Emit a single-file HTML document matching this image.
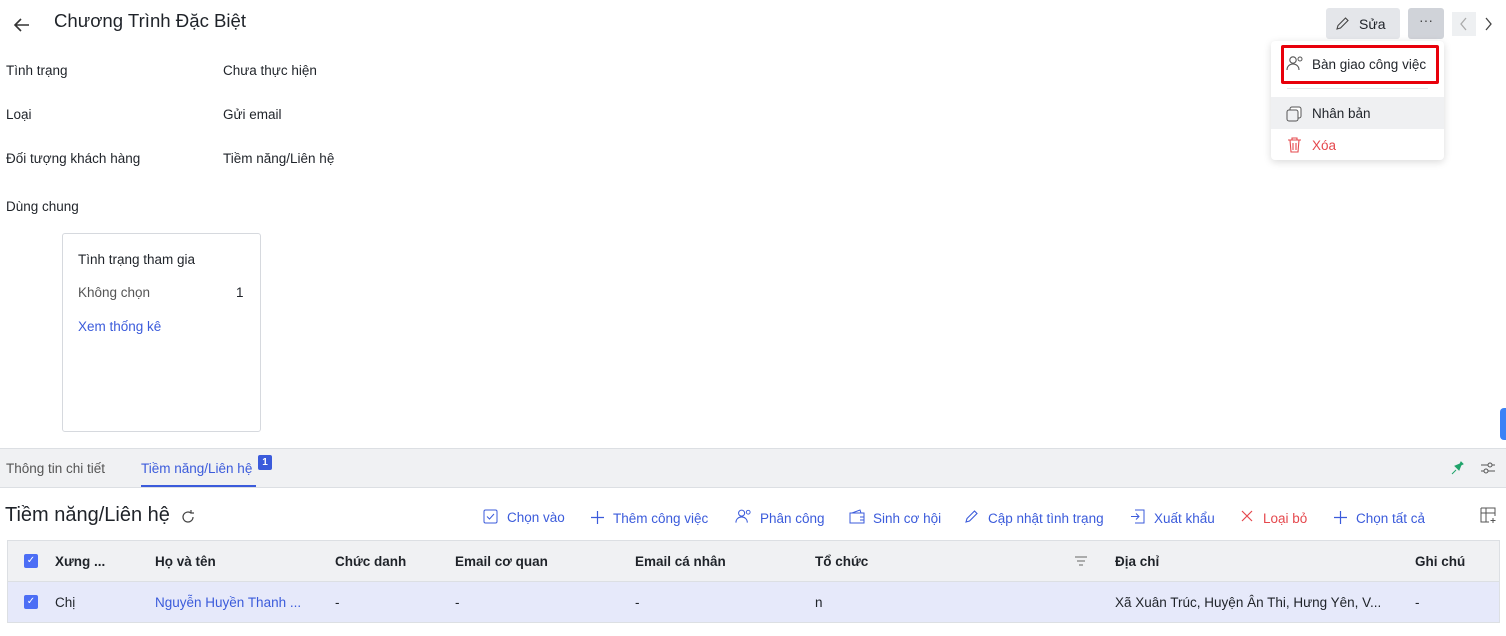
<!DOCTYPE html><html><head><meta charset="utf-8"><style>
*{box-sizing:border-box;margin:0;padding:0}
body{width:1506px;height:636px;overflow:hidden;background:#fff;font-family:"Liberation Sans",sans-serif;font-size:13.5px;color:#1f2329;position:relative}
.a{position:absolute;white-space:nowrap}
.blue{color:#3b5bdb}
svg{position:absolute}
</style></head><body>
<svg style="left:12px;top:15px" width="20" height="20" viewBox="0 0 20 20"><path d="M17 10H3M9 4l-6 6 6 6" fill="none" stroke="#333" stroke-width="1.6"/></svg>
<div class="a" style="left:54px;top:10px;font-size:18.6px">Chương Trình Đặc Biệt</div>

<div class="a" style="left:1326px;top:8px;width:74px;height:31px;background:#e4e6ea;border-radius:3px"></div>
<svg style="left:1335px;top:16px" width="15" height="15" viewBox="0 0 15 15"><path d="M2 13l1-3.5 7.5-7.5 2.5 2.5L5.5 12z" fill="none" stroke="#444" stroke-width="1.1"/></svg>
<div class="a" style="left:1359px;top:16px;font-size:14px">Sửa</div>
<div class="a" style="left:1408px;top:8px;width:36px;height:31px;background:#d0d3d9;border-radius:3px;text-align:center;line-height:24px;font-size:14px;color:#444">···</div>
<div class="a" style="left:1452px;top:12px;width:24px;height:24px;background:#eef0f2"></div>
<svg style="left:1458px;top:16px" width="12" height="16"><path d="M8 2L3 8l5 6" fill="none" stroke="#aaa" stroke-width="1.3"/></svg>
<svg style="left:1482px;top:16px" width="12" height="16"><path d="M4 2l5 6-5 6" fill="none" stroke="#444" stroke-width="1.3"/></svg>

<div class="a" style="left:1271px;top:41px;width:173px;height:119px;background:#fff;border-radius:4px;box-shadow:0 2px 8px rgba(0,0,0,.15)"></div>
<div class="a" style="left:1281px;top:45px;width:158px;height:39px;border:3px solid #e8000b;border-radius:2px"></div>
<svg style="left:1286px;top:55px" width="18" height="16" viewBox="0 0 18 16"><circle cx="7" cy="5" r="3.2" fill="none" stroke="#555" stroke-width="1.1"/><path d="M1 15c0-4 3-6 6-6s6 2 6 6" fill="none" stroke="#555" stroke-width="1.1"/><circle cx="14" cy="4" r="2" fill="none" stroke="#555"/></svg>
<div class="a" style="left:1312px;top:57px">Bàn giao công việc</div>
<div class="a" style="left:1287px;top:88px;width:141px;height:1px;background:#e4e6ea"></div>
<div class="a" style="left:1271px;top:97px;width:173px;height:32px;background:#eff0f2"></div>
<svg style="left:1286px;top:106px" width="16" height="16"><rect x="4" y="1" width="11" height="11" rx="2" fill="#fff" stroke="#555"/><rect x="1" y="4" width="11" height="11" rx="2" fill="#eff0f2" stroke="#555"/></svg>
<div class="a" style="left:1312px;top:106px">Nhân bản</div>
<svg style="left:1287px;top:137px" width="15" height="16"><path d="M1 3h13M5 3V1h5v2M3 3l1 12h7l1-12M6 6v7M9 6v7" fill="none" stroke="#e5484d" stroke-width="1.1"/></svg>
<div class="a" style="left:1312px;top:138px;color:#e5484d">Xóa</div>

<div class="a" style="left:6px;top:63px">Tình trạng</div><div class="a" style="left:223px;top:63px">Chưa thực hiện</div>
<div class="a" style="left:6px;top:107px">Loại</div><div class="a" style="left:223px;top:107px">Gửi email</div>
<div class="a" style="left:6px;top:151px">Đối tượng khách hàng</div><div class="a" style="left:223px;top:151px">Tiềm năng/Liên hệ</div>
<div class="a" style="left:6px;top:199px">Dùng chung</div>

<div class="a" style="left:62px;top:233px;width:199px;height:199px;border:1px solid #d6d9de;border-radius:3px"></div>
<div class="a" style="left:78px;top:252px">Tình trạng tham gia</div>
<div class="a" style="left:78px;top:285px;color:#555">Không chọn</div><div class="a" style="left:236px;top:285px">1</div>
<div class="a blue" style="left:78px;top:319px">Xem thống kê</div>
<div class="a" style="left:1500px;top:408px;width:8px;height:32px;background:#3b82f6;border-radius:4px 0 0 4px"></div>

<div class="a" style="left:0;top:448px;width:1506px;height:40px;background:#f0f1f3;border-top:1px solid #dcdfe3;border-bottom:1px solid #dcdfe3"></div>
<div class="a" style="left:6px;top:461px;color:#555">Thông tin chi tiết</div>
<div class="a blue" style="left:141px;top:461px">Tiềm năng/Liên hệ</div>
<div class="a" style="left:141px;top:485px;width:115px;height:2px;background:#3b5bdb"></div>
<div class="a" style="left:258px;top:455px;width:14px;height:15px;background:#3b5bdb;color:#fff;font-size:10px;font-weight:bold;text-align:center;line-height:15px;border-radius:2px">1</div>
<svg style="left:1449px;top:460px" width="16" height="16"><path d="M3 14l4-4M6 6l4 4 2-5 2-1-2-2-1 2z" fill="#20a46b" stroke="#20a46b"/></svg>
<svg style="left:1480px;top:460px" width="16" height="16"><path d="M1 5h14M1 11h14" stroke="#555"/><circle cx="10" cy="5" r="2" fill="#f0f1f3" stroke="#555"/><circle cx="6" cy="11" r="2" fill="#f0f1f3" stroke="#555"/></svg>

<div class="a" style="left:5px;top:504px;font-size:20px">Tiềm năng/Liên hệ</div>
<svg style="left:180px;top:509px" width="16" height="16"><path d="M13 8a5 5 0 1 1-2-4M11 1v3h3" fill="none" stroke="#444" stroke-width="1.2"/></svg>
<svg style="left:483px;top:509px" width="15" height="15"><rect x="1" y="1" width="13" height="13" rx="1.5" fill="none" stroke="#3b5bdb"/><path d="M4 7.5l2.5 2.5 4.5-5" fill="none" stroke="#3b5bdb"/></svg>
<div class="a blue" style="left:507px;top:510px">Chọn vào</div>
<svg style="left:590px;top:510px" width="15" height="15"><path d="M7.5 1v13M1 7.5h13" stroke="#3b5bdb" stroke-width="1.2"/></svg>
<div class="a blue" style="left:613px;top:511px">Thêm công việc</div>
<svg style="left:735px;top:508px" width="17" height="16" viewBox="0 0 18 16"><circle cx="7" cy="5" r="3.2" fill="none" stroke="#3b5bdb" stroke-width="1.1"/><path d="M1 15c0-4 3-6 6-6s6 2 6 6" fill="none" stroke="#3b5bdb" stroke-width="1.1"/><circle cx="14" cy="4" r="2" fill="none" stroke="#3b5bdb"/></svg>
<div class="a blue" style="left:760px;top:511px">Phân công</div>
<svg style="left:849px;top:509px" width="16" height="15"><path d="M1 4h14v10H1zM3 4l8-3 1 3M11 8h4v3h-4" fill="none" stroke="#3b5bdb"/></svg>
<div class="a blue" style="left:873px;top:511px">Sinh cơ hội</div>
<svg style="left:964px;top:509px" width="15" height="15" viewBox="0 0 15 15"><path d="M2 13l1-3.5 7.5-7.5 2.5 2.5L5.5 12z" fill="none" stroke="#3b5bdb" stroke-width="1.1"/></svg>
<div class="a blue" style="left:988px;top:511px">Cập nhật tình trạng</div>
<svg style="left:1130px;top:509px" width="15" height="15"><path d="M5 1h9v13H5M1 7.5h8M6 4.5l3 3-3 3" fill="none" stroke="#3b5bdb"/></svg>
<div class="a blue" style="left:1154px;top:511px">Xuất khẩu</div>
<svg style="left:1241px;top:510px" width="12" height="12"><path d="M1 1l10 10M11 1L1 11" stroke="#e5484d" stroke-width="1.2"/></svg>
<div class="a" style="left:1263px;top:511px;color:#e5484d">Loại bỏ</div>
<svg style="left:1333px;top:510px" width="15" height="15"><path d="M7.5 1v13M1 7.5h13" stroke="#3b5bdb" stroke-width="1.2"/></svg>
<div class="a blue" style="left:1356px;top:511px">Chọn tất cả</div>
<svg style="left:1480px;top:507px" width="17" height="17"><path d="M1 1h14v8M1 1v14h8M1 6h14M6 1v14M13 11v5M10.5 13.5h5" fill="none" stroke="#555"/></svg>

<div class="a" style="left:7px;top:540px;width:1493px;height:42px;background:#f0f1f3;border:1px solid #dcdfe3"></div>
<div class="a" style="left:7px;top:582px;width:1493px;height:41px;background:#e6e9fa;border-bottom:1px solid #dcdfe3;border-left:1px solid #dcdfe3;border-right:1px solid #dcdfe3"></div>
<div class="a" style="left:24px;top:554px;width:14px;height:14px;background:#4c6ef5;border-radius:2px;color:#fff;font-size:10px;text-align:center;line-height:14px">✓</div>
<div class="a" style="left:24px;top:595px;width:14px;height:14px;background:#4c6ef5;border-radius:2px;color:#fff;font-size:10px;text-align:center;line-height:14px">✓</div>
<div style="font-weight:bold">
<div class="a" style="left:55px;top:554px">Xưng ...</div>
<div class="a" style="left:155px;top:554px">Họ và tên</div>
<div class="a" style="left:335px;top:554px">Chức danh</div>
<div class="a" style="left:455px;top:554px">Email cơ quan</div>
<div class="a" style="left:635px;top:554px">Email cá nhân</div>
<div class="a" style="left:815px;top:554px">Tổ chức</div>
<div class="a" style="left:1115px;top:554px">Địa chỉ</div>
<div class="a" style="left:1415px;top:554px">Ghi chú</div>
</div>
<svg style="left:1075px;top:556px" width="12" height="10"><path d="M0 1h12M2 5h8M4 9h4" stroke="#666"/></svg>
<div class="a" style="left:55px;top:595px">Chị</div>
<div class="a blue" style="left:155px;top:595px">Nguyễn Huyền Thanh ...</div>
<div class="a" style="left:335px;top:595px">-</div>
<div class="a" style="left:455px;top:595px">-</div>
<div class="a" style="left:635px;top:595px">-</div>
<div class="a" style="left:815px;top:595px">n</div>
<div class="a" style="left:1115px;top:595px">Xã Xuân Trúc, Huyện Ân Thi, Hưng Yên, V...</div>
<div class="a" style="left:1415px;top:595px">-</div>
</body></html>
